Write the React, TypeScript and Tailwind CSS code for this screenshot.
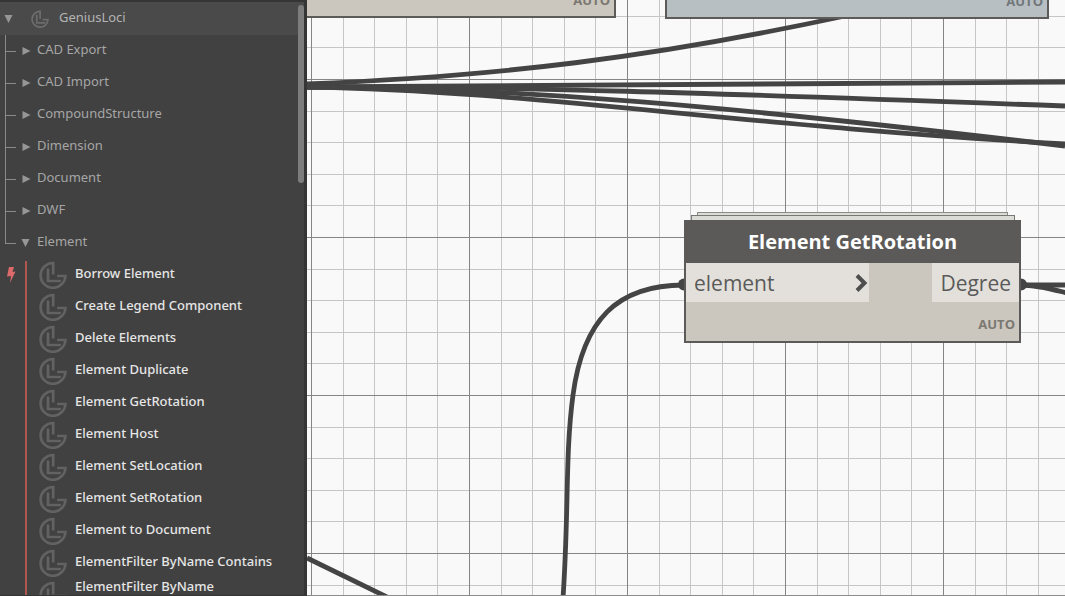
import React, { useState } from 'react';

const categories = ['CAD Export', 'CAD Import', 'CompoundStructure', 'Dimension', 'Document', 'DWF', 'Element'];

const elementNodes = [
  'Borrow Element',
  'Create Legend Component',
  'Delete Elements',
  'Element Duplicate',
  'Element GetRotation',
  'Element Host',
  'Element SetLocation',
  'Element SetRotation',
  'Element to Document',
  'ElementFilter ByName Contains',
];

const wires = [
  'M0 84 C193 76 343 58 538 16',
  'M0 87 C250 86 500 84 758 82',
  'M0 87 C200 86 400 93 758 106',
  'M0 87 C220 88 420 106 758 146',
  'M0 87 C220 90 420 125 758 144',
  'M0 558 L82 598',
  'M377 285 C310 285 276 320 266 395 C258 455 262 510 256 598',
  'M714 285 L758 285',
  'M714 285 C730 285 744 289 760 293',
];

function LociIcon({ className }: { className: string }) {
  return (
    <svg viewBox="0 0 28 28" className={className} fill="none" stroke="currentColor" strokeWidth="2.7">
      <path d="M14.2 13.5 V2 A12.4 12.4 0 1 0 26.4 15 H18" />
      <path d="M9 7.5 V20 H22" />
    </svg>
  );
}

function Arrow({ open }: { open: boolean }) {
  return (
    <svg viewBox="0 0 10 10" className="w-[10px] h-[10px] mt-[2px] shrink-0 fill-[#969696]">
      {open ? <path d="M0.5 1 H8.5 L4.5 9 Z" /> : <path d="M1.5 1 L9.5 5 L1.5 9 Z" />}
    </svg>
  );
}

function Grid() {
  const steps = Array.from({ length: 80 }, (_, i) => i);
  const minor = steps.filter((i) => i % 5 !== 0);
  const major = steps.filter((i) => i % 5 === 0);
  const draw = (i: number) => {
    const x = Math.floor(4.5 + i * 31.6) + 0.5;
    const y = Math.floor(-78.5 + i * 31.6) + 0.5;
    return (
      <React.Fragment key={i}>
        <line x1={x} x2={x} y1="0" y2="100%" />
        <line x1="0" x2="100%" y1={y} y2={y} />
      </React.Fragment>
    );
  };
  return (
    <>
      <g stroke="#c6c6c6">{minor.map(draw)}</g>
      <g stroke="#858585">{major.map(draw)}</g>
    </>
  );
}

export default function App() {
  const [open, setOpen] = useState(true);

  return (
    <div className="flex h-screen overflow-hidden bg-[#f9f9f9] font-['Open_Sans',sans-serif]">
      <aside className="relative w-[307px] shrink-0 overflow-hidden bg-[#414141] border-t-2 border-b border-r-3 border-[#353535] font-['Noto_Sans',sans-serif] text-[13px]">
        <button className="flex items-center w-full h-[33px] pl-1 pb-[2px] bg-[#4a4a4a] text-[#b4b4b4]">
          <Arrow open />
          <LociIcon className="w-[18px] h-[18px] mt-[2px] ml-[17px] mr-[10px] text-[#6c6c6c]" />
          GeniusLoci
        </button>

        <ul className="text-[#a6a6a6]">
          {categories.map((name) => {
            const isOpen = name === 'Element' && open;
            const last = name === 'Element';
            return (
              <li key={name} className="flex h-8">
                <span className="flex flex-col w-[11px] ml-[5px] shrink-0">
                  <span className="h-[17px] border-l border-b border-[#8a8a8a]" />
                  <span className={last ? 'h-[15px]' : 'h-[15px] border-l border-[#8a8a8a]'} />
                </span>
                <button
                  onClick={() => last && setOpen(!open)}
                  className="flex items-center gap-[6px] pl-[5px] pb-[2px]"
                >
                  <Arrow open={isOpen} />
                  {name}
                </button>
              </li>
            );
          })}
        </ul>

        {open && (
          <div className="flex pt-[2px]">
            <div className="w-[25px] shrink-0 flex justify-center">
              <svg viewBox="0 0 10 16" className="w-[10px] h-4 mt-[6px] mr-1 fill-[#dc6a6b]">
                <path d="M3 0 L8 0 L6.5 5 L9.5 4.5 L4 16 L5 9 L1 9.5 Z" />
              </svg>
            </div>
            <ul className="grow border-l-2 border-[#b0564f] text-[#e6e6e6] font-medium">
              {elementNodes.map((name) => (
                <li key={name} className="h-8">
                  <button className="flex items-start gap-2 h-full pl-3 whitespace-nowrap">
                    <LociIcon className="w-7 h-7 text-[#626262]" />
                    <span className="leading-6">{name}</span>
                  </button>
                </li>
              ))}
              <li>
                <button className="flex items-start gap-2 pl-3 whitespace-nowrap">
                  <LociIcon className="w-7 h-7 text-[#626262]" />
                  <span className="leading-[10px]">ElementFilter ByName</span>
                </button>
              </li>
            </ul>
          </div>
        )}

        <div className="absolute right-0 top-[3px] w-[6px] h-[178px] rounded-full bg-[#7d7d7d]" />
      </aside>

      <main className="relative grow overflow-hidden border-b border-[#8c8c8c]">
        <svg className="absolute inset-0 w-full h-full">
          <Grid />
          <g fill="none" stroke="#444444" strokeWidth="4.8">
            {wires.map((d) => (
              <path key={d} d={d} />
            ))}
          </g>
          <g fill="#444444">
            <circle cx="377" cy="284.5" r="6" />
            <circle cx="714" cy="284.5" r="6" />
          </g>
        </svg>

        <section className="absolute left-[-40px] top-[-102px] w-[349px] h-[120px] flex items-end justify-end px-1 pb-2 bg-[#cbc6be] border-2 border-[#5c5b58]">
          <span className="text-[13px] leading-4 font-bold text-[#7b7872]">AUTO</span>
        </section>
        <section className="absolute left-[358px] top-[-101px] w-[384px] h-[120px] flex items-end justify-end px-1 pb-2 bg-[#b8bfc2] border-2 border-[#5c5b58]">
          <span className="text-[13px] leading-4 font-bold text-[#71777a]">AUTO</span>
        </section>

        <section className="absolute left-[377px] top-[212px] w-[337px]">
          <div className="ml-[13px] mr-[13px] h-[3px] border border-b-0 border-[#8b8b86] bg-[#dcdcd6]" />
          <div className="ml-[7px] mr-[6px] h-[5px] border border-b-0 border-[#777773] bg-[#dcdcd6]" />
          <div className="bg-[#cbc6be] border-2 border-t-0 border-[#5b5a58]">
            <h2 className="h-[43px] flex items-center justify-center bg-[#5b5a58] text-white text-[20px] font-bold pt-px">
              Element GetRotation
            </h2>
            <div className="flex justify-between h-[39px] text-[21px] text-[#5a5a5a]">
              <button className="w-[183px] flex items-center justify-between pl-2 pt-[2px] bg-[#e3e0db]">
                element
                <svg viewBox="0 0 14 18" className="w-[14px] h-[18px] mb-[2px]" fill="none" stroke="#4e4e4e" strokeWidth="4">
                  <path d="M2 1.5 L9.5 9 L2 16.5" />
                </svg>
              </button>
              <button className="px-2 pt-[2px] bg-[#e3e0db]">Degree</button>
            </div>
            <div className="h-[39px] flex items-center justify-end px-1 pt-[6px] text-[13px] font-bold text-[#7b7872]">AUTO</div>
          </div>
        </section>
      </main>
    </div>
  );
}
